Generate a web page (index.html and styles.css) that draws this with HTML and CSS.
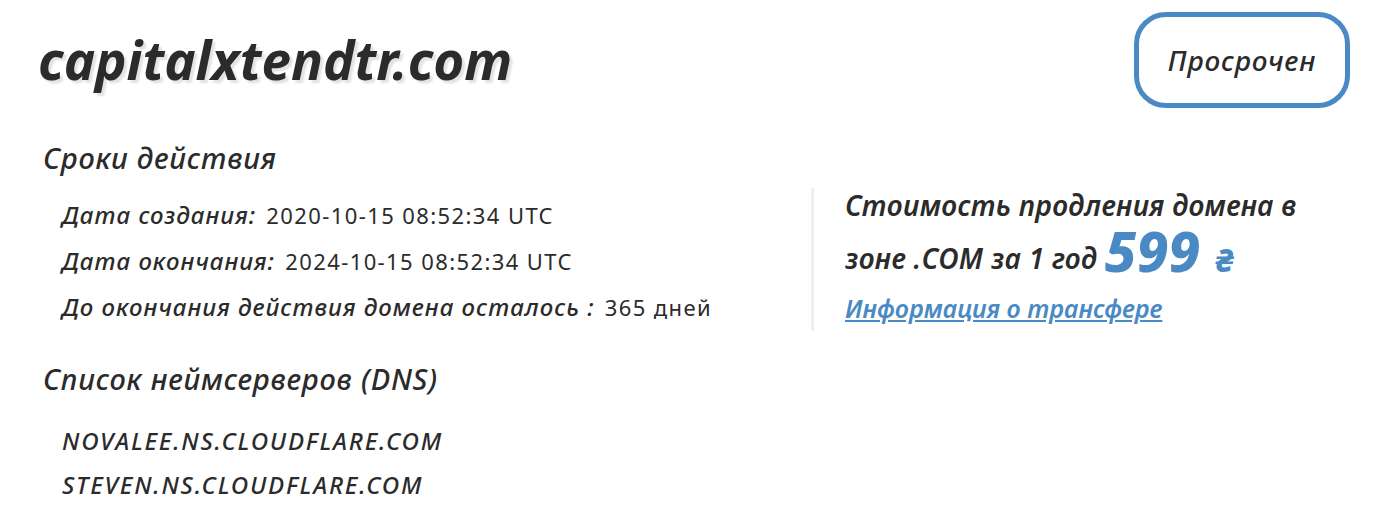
FILE: index.html
```html
<!DOCTYPE html>
<html>
<head>
    <title>capitalxtendtr.com</title>
    <link rel="stylesheet" href="styles.css">
</head>
<body>
    <div class="page">
        <div class="header">
            <h1 class="domain">capitalxtendtr.com</h1>
            <div class="status">Просрочен</div>
        </div>

        <div class="info">
            <div class="dates">
                <h2>Сроки действия</h2>
                <div class="row"><span class="label">Дата создания:</span> <span class="value">2020-10-15 08:52:34 UTC</span></div>
                <div class="row"><span class="label">Дата окончания:</span> <span class="value">2024-10-15 08:52:34 UTC</span></div>
                <div class="row"><span class="label">До окончания действия домена осталось :</span> <span class="value">365 дней</span></div>
            </div>

            <div class="price">
                <p class="price-text">Стоимость продления домена в зоне .COM за 1 год <span class="sum">599 <span class="cur">₴</span></span></p>
                <a href="#" class="transfer">Информация о трансфере</a>
            </div>
        </div>

        <div class="dns">
            <h2>Список неймсерверов (DNS)</h2>
            <div class="ns">NOVALEE.NS.CLOUDFLARE.COM</div>
            <div class="ns">STEVEN.NS.CLOUDFLARE.COM</div>
        </div>
    </div>
</body>
</html>
```

FILE: styles.css
```css
body {
    margin: 0;
    background-color: #fff;
    color: #2b2b2b;
    font-family: "Noto Sans", Arial, sans-serif;
}

.page {
    padding: 12px 30px 0 38px;
}

.header {
    display: flex;
    justify-content: space-between;
    align-items: flex-start;
}

.domain {
    margin: 18px 0 0 0;
    font-size: 53px;
    font-style: italic;
    font-weight: bold;
    text-shadow: 3px 3px 2px #e3e3e3;
    line-height: 60px;
}

.status {
    width: 206px;
    height: 86px;
    border: 5px solid #4a8ac4;
    border-radius: 32px;
    display: flex;
    align-items: center;
    justify-content: center;
    font-size: 28px;
    font-style: italic;
    font-weight: 500;
    letter-spacing: 0.8px;
}

h2 {
    margin: 0;
    font-size: 29px;
    font-style: italic;
    font-weight: 500;
    letter-spacing: 0.8px;
}

.info {
    display: flex;
    margin-top: 30px;
    margin-left: 5px;
}

.dates {
    width: 768px;
}

.dates h2 {
    margin-bottom: 15px;
}

.row {
    margin-left: 19px;
    height: 46px;
    line-height: 46px;
    font-size: 24px;
}

.label {
    font-style: italic;
    font-weight: 500;
    letter-spacing: 1px;
}

.value {
    font-size: 22px;
    letter-spacing: 1.4px;
    margin-left: 4px;
}

.price {
    border-left: 3px solid #efefef;
    margin-top: 50px;
    padding-left: 31px;
    height: 143px;
    width: 460px;
}

.price-text {
    margin: 0;
    margin-top: -8px;
    font-size: 28px;
    font-style: italic;
    font-weight: 600;
    letter-spacing: 0.3px;
    line-height: 50px;
}

.sum {
    color: #4a8ac4;
    font-size: 56px;
    font-weight: 800;
    line-height: 40px;
    vertical-align: -3px;
}

.cur {
    font-size: 32px;
}

.transfer {
    display: block;
    margin-top: 5px;
    color: #4a8ac4;
    font-size: 25px;
    font-style: italic;
    font-weight: 600;
    line-height: 40px;
}

.dns {
    margin-top: 28px;
    margin-left: 5px;
}

.dns h2 {
    margin-bottom: 21px;
}

.ns {
    margin-left: 19px;
    font-size: 24px;
    font-style: italic;
    font-weight: 500;
    letter-spacing: 1.8px;
    line-height: 44px;
}
```
